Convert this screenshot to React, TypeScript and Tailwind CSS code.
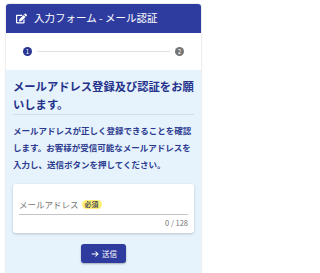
import React from 'react'
import { FaEdit } from 'react-icons/fa'

const App = () => {
  return (
    <div className="w-[207px] h-[273px] overflow-hidden bg-white pt-[4px] px-[6px] font-['Noto_Sans_CJK_JP','Noto_Sans',sans-serif]">
      <div className="h-full flex flex-col rounded-t-[3px] overflow-hidden shadow-[0_0_2px_rgba(0,0,0,0.25)]">
        <div className="h-[29px] shrink-0 bg-[#2f3c9f] flex items-center gap-[7px] pl-[10px] text-white text-[10.5px] leading-none">
          <FaEdit className="w-[11px] h-[11px]" />
          <span>入力フォーム - メール認証</span>
        </div>
        <div className="h-[37px] shrink-0 bg-white flex items-center px-[17px] gap-[5px]">
          <div className="w-[9px] h-[9px] rounded-full bg-[#283593] text-white text-[6px] leading-none flex items-center justify-center">1</div>
          <div className="flex-1 h-px bg-[#e0e0e0]" />
          <div className="w-[9px] h-[9px] rounded-full bg-[#757575] text-white text-[6px] leading-none flex items-center justify-center">2</div>
        </div>
        <div className="flex-1 bg-[#e6f3fd] px-[7px] pt-[7px]">
          <p className="text-[11.3px] leading-[18px] font-bold text-[#24318a]">メールアドレス登録及び認証をお願いします。</p>
          <div className="h-px bg-[#d3dde6] mt-[1px]" />
          <p className="mt-[7px] text-[8.5px] leading-[17px] font-bold text-[#2c3a8f]">メールアドレスが正しく登録できることを確認します。お客様が受信可能なメールアドレスを入力し、送信ボタンを押してください。</p>
          <div className="mt-[11px] bg-white rounded-[3px] shadow-[0_1px_3px_rgba(0,0,0,0.2)] h-[49px] px-[6px] pt-[14px]">
            <div className="flex items-center gap-[3px] text-[8.5px] leading-none text-[#757575] h-[13px]">
              <span>メールアドレス</span>
              <span className="bg-[#fff176] text-[#555] text-[7px] rounded-full px-[3px] py-[1px] font-bold">必須</span>
            </div>
            <div className="h-px bg-[#c4c4c4] mt-[3px]" />
            <div className="text-right text-[7.5px] leading-none text-[#757575] mt-[4px]">0 / 128</div>
          </div>
          <div className="flex justify-center mt-[11px]">
            <button className="w-[45px] h-[19px] rounded-[3px] bg-[#2f3c9f] text-white text-[7.5px] leading-none flex items-center justify-center gap-[2px] shadow-[0_1px_2px_rgba(0,0,0,0.3)]">
              <svg viewBox="0 0 24 24" className="w-[10px] h-[10px]" fill="none" stroke="white" strokeWidth="2.5">
                <path d="M4 12h15M13 6l6 6-6 6" />
              </svg>
              <span>送信</span>
            </button>
          </div>
        </div>
      </div>
    </div>
  )
}

export default App
